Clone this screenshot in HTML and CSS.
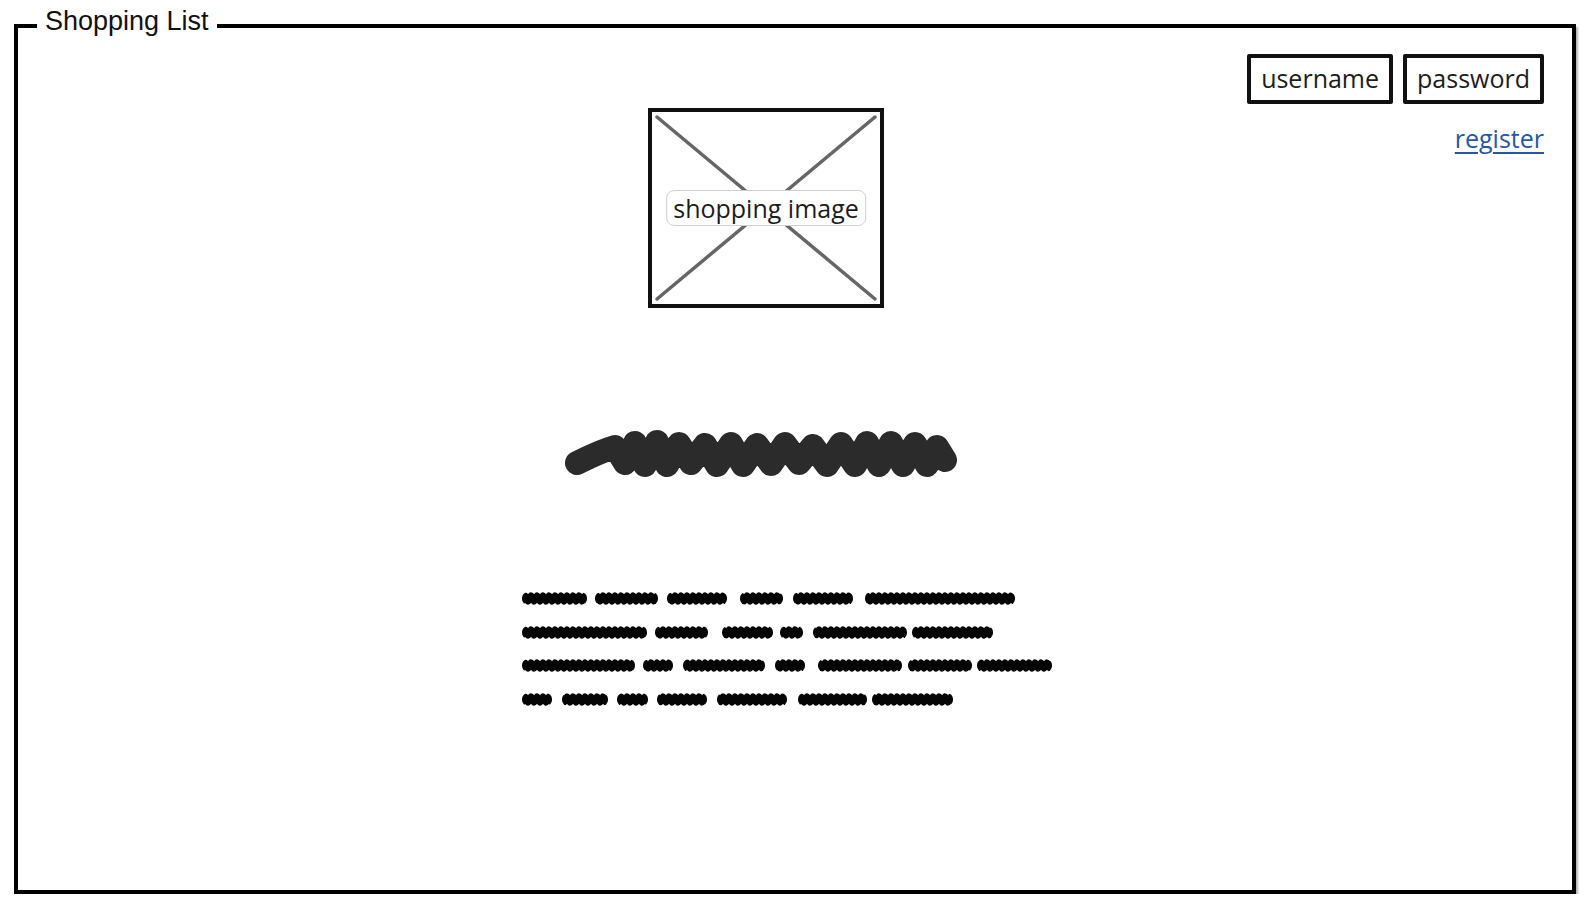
FILE: index.html
```html
<!DOCTYPE html>
<html lang="en">
<head>
    <meta charset="UTF-8">
    <meta name="viewport" content="width=device-width, initial-scale=1.0">
    <title>Shopping List</title>
    <link rel="stylesheet" href="styles.css">
</head>
<body>
    <fieldset class="frame">
        <legend class="frame-title">Shopping List</legend>

        <div class="page">
            <main class="content">
                <div class="hero-image">
                    <svg class="hero-cross" viewBox="0 0 228 192" preserveAspectRatio="none">
                        <line x1="5" y1="5" x2="223" y2="187" />
                        <line x1="223" y1="5" x2="5" y2="187" />
                    </svg>
                    <span class="hero-label">shopping image</span>
                </div>

                <!-- headline placeholder (scribble) -->
                <svg class="headline" width="392" height="54" viewBox="0 0 392 54">
                    <defs>
                        <pattern id="scrib" width="6" height="14" patternUnits="userSpaceOnUse">
                            <path d="M-3 4 L0 9 L3 4 L6 9 L9 4" />
                        </pattern>
                    </defs>
                    <path class="headline-ink" d="M12 36 C24 30 36 24 50 20 L60 36 L70 16 L80 38 L92 15 L102 38 L114 17 L126 36 L140 18 L152 38 L166 17 L178 38 L192 18 L206 37 L220 17 L234 36 L248 19 L262 38 L276 17 L290 38 L302 16 L314 38 L326 16 L338 38 L350 17 L362 38 L372 20 L380 33" />
                </svg>

                <!-- paragraph placeholder (scribbled words) -->
                <div class="blurb">
                    <svg class="blurb-line" width="540" height="14">
                        <rect x="0" width="65" height="13" rx="6" />
                        <rect x="73" width="63" height="13" rx="6" />
                        <rect x="145" width="60" height="13" rx="6" />
                        <rect x="218" width="43" height="13" rx="6" />
                        <rect x="271" width="60" height="13" rx="6" />
                        <rect x="343" width="150" height="13" rx="6" />
                    </svg>
                    <svg class="blurb-line" width="540" height="14">
                        <rect x="0" width="125" height="13" rx="6" />
                        <rect x="133" width="53" height="13" rx="6" />
                        <rect x="200" width="51" height="13" rx="6" />
                        <rect x="258" width="23" height="13" rx="6" />
                        <rect x="291" width="94" height="13" rx="6" />
                        <rect x="390" width="81" height="13" rx="6" />
                    </svg>
                    <svg class="blurb-line" width="540" height="14">
                        <rect x="0" width="113" height="13" rx="6" />
                        <rect x="121" width="30" height="13" rx="6" />
                        <rect x="161" width="82" height="13" rx="6" />
                        <rect x="253" width="30" height="13" rx="6" />
                        <rect x="296" width="84" height="13" rx="6" />
                        <rect x="386" width="64" height="13" rx="6" />
                        <rect x="455" width="75" height="13" rx="6" />
                    </svg>
                    <svg class="blurb-line" width="540" height="14">
                        <rect x="0" width="30" height="13" rx="6" />
                        <rect x="40" width="46" height="13" rx="6" />
                        <rect x="95" width="31" height="13" rx="6" />
                        <rect x="135" width="50" height="13" rx="6" />
                        <rect x="195" width="70" height="13" rx="6" />
                        <rect x="276" width="69" height="13" rx="6" />
                        <rect x="350" width="81" height="13" rx="6" />
                    </svg>
                </div>
            </main>

            <aside class="login">
                <div class="login-fields">
                    <span class="field">username</span>
                    <span class="field">password</span>
                </div>
                <a class="register" href="#">register</a>
            </aside>
        </div>
    </fieldset>
</body>
</html>
```

FILE: styles.css
```css
body {
    margin: 0;
    background-color: white;
    font-family: 'Open Sans', 'Liberation Sans', sans-serif;
    color: #1c1c1c;
}

.frame {
    box-sizing: border-box;
    width: 1562px;
    height: 888px;
    margin: 6px 0 0 14px;
    padding: 0;
    border: 4px solid #000;
    box-shadow: 2px 3px 2px rgba(0, 0, 0, 0.3);
}

.frame-title {
    margin-left: 19px;
    padding: 0 8px 9px 8px;
    font-family: 'Liberation Sans', Arial, sans-serif;
    font-size: 27px;
    line-height: 30px;
    color: #111;
}

.page {
    display: grid;
    grid-template-columns: 1fr auto;
    padding-top: 9px;
}

.content {
    padding-left: 504px;
}

.hero-image {
    position: relative;
    box-sizing: border-box;
    width: 236px;
    height: 200px;
    margin: 54px 0 0 126px;
    border: 4px solid #111;
}

.hero-cross {
    display: block;
    width: 100%;
    height: 100%;
}

.hero-cross line {
    stroke: #666;
    stroke-width: 3.5;
    stroke-linecap: round;
}

.hero-label {
    position: absolute;
    left: 50%;
    top: 50%;
    transform: translate(-50%, -50%);
    padding: 0 6px;
    border: 1.5px solid #cfcfcf;
    border-radius: 8px;
    background-color: white;
    font-size: 25px;
    line-height: 34px;
    white-space: nowrap;
}

.headline {
    display: block;
    margin: 119px 0 0 43px;
}

.headline-ink {
    fill: none;
    stroke: #2b2b2b;
    stroke-width: 24;
    stroke-linecap: round;
    stroke-linejoin: round;
}

#scrib path {
    fill: none;
    stroke: #050505;
    stroke-width: 7;
    stroke-linecap: round;
    stroke-linejoin: round;
}

.blurb {
    display: flex;
    flex-direction: column;
    gap: 19.5px;
    margin-top: 111px;
}

.blurb-line {
    display: block;
}

.blurb-line rect {
    fill: url(#scrib);
}

.login {
    display: flex;
    flex-direction: column;
    align-items: flex-end;
    padding-right: 28px;
}

.login-fields {
    display: flex;
    gap: 10px;
}

.field {
    padding: 5px 10px 7px;
    border: 4px solid #111;
    border-radius: 2px;
    font-size: 25px;
    line-height: 30px;
}

.register {
    margin-top: 19px;
    font-size: 25px;
    line-height: 30px;
    color: #2458a6;
    text-decoration: underline;
    text-underline-offset: 4px;
}
```
